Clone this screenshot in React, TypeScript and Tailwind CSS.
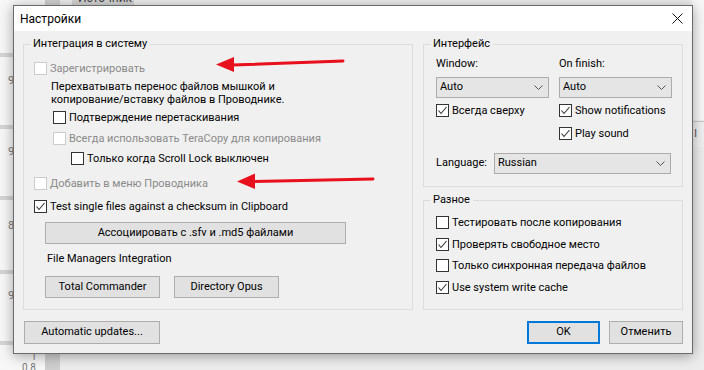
import React from "react";

const font = { fontFamily: 'Roboto, "Noto Sans", sans-serif' };

function Box({ checked, disabled }: { checked?: boolean; disabled?: boolean }) {
  return (
    <span
      className={`flex w-[13px] h-[13px] shrink-0 items-center justify-center border bg-white ${
        disabled ? "border-[#cccccc]" : "border-[#333333]"
      }`}
    >
      {checked && (
        <svg width="11" height="11" viewBox="0 0 11 11">
          <path d="M1.5 5.5 L4 8.5 L9.5 2" fill="none" stroke="#333" strokeWidth="1.1" />
        </svg>
      )}
    </span>
  );
}

function Check({
  label,
  checked,
  disabled,
  className = "",
}: {
  label: string;
  checked?: boolean;
  disabled?: boolean;
  className?: string;
}) {
  return (
    <div className={`flex h-[13px] items-center gap-[3px] ${className}`}>
      <Box checked={checked} disabled={disabled} />
      <span className={`whitespace-nowrap leading-[13px] ${disabled ? "text-[#8a8a8a]" : "text-black"}`}>
        {label}
      </span>
    </div>
  );
}

function Btn({ label, className = "" }: { label: string; className?: string }) {
  return (
    <div
      className={`flex h-[22px] items-center justify-center border border-[#adadad] bg-[#e1e1e1] text-black ${className}`}
    >
      {label}
    </div>
  );
}

function Select({ value, className = "" }: { value: string; className?: string }) {
  return (
    <div
      className={`flex h-[21px] items-center justify-between border border-[#acacac] bg-[#e5e5e5] pl-[3px] pr-[5px] ${className}`}
    >
      <span>{value}</span>
      <svg width="9" height="5" viewBox="0 0 9 5">
        <path d="M0.5 0.5 L4.5 4.5 L8.5 0.5" fill="none" stroke="#555" strokeWidth="1" />
      </svg>
    </div>
  );
}

function Group({
  title,
  className = "",
  children,
}: {
  title: string;
  className?: string;
  children: React.ReactNode;
}) {
  return (
    <div className={`relative border border-[#dcdcdc] ${className}`}>
      <span className="absolute left-[6px] top-[-8px] bg-[#f0f0f0] px-[3px] leading-[14px] text-black">
        {title}
      </span>
      {children}
    </div>
  );
}

function Background() {
  const bars = [53, 125, 196, 270, 341];
  const nums = [
    { y: 75, t: "9" },
    { y: 146, t: "9" },
    { y: 220, t: "8" },
    { y: 290, t: "9" },
  ];
  return (
    <div className="absolute inset-0 flex">
      <div className="relative w-[45px] bg-[#f7f7f7]">
        {bars.map((y) => (
          <div key={y} className="absolute left-0 h-[4px] w-[45px] bg-[#d4d4d4]" style={{ top: y }} />
        ))}
        {nums.map((n) => (
          <span key={n.y} className="absolute left-[8px] text-[11px] leading-[12px] text-[#777]" style={{ top: n.y }}>
            {n.t}
          </span>
        ))}
        <span className="absolute left-[31px] top-[352px] text-[10px] leading-[10px] text-[#777]">1</span>
        <span className="absolute left-[22px] top-[363px] text-[10px] leading-[10px] text-[#777]">0.8</span>
      </div>
      <div className="w-[15px] bg-[#cfcfcf]" />
      <div className="relative flex-1 bg-[#ececec]">
        <div className="absolute left-[12px] top-0 h-[5px] w-[62px] overflow-hidden bg-[#d3d3d3]">
          <span className="absolute left-[6px] top-[-8px] text-[12px] leading-[12px] text-[#444]">Источник</span>
        </div>
        <div className="absolute right-0 top-0 h-[120px] w-[12px] bg-[#f7f7f7]" />
        <div className="absolute right-0 top-[121px] h-[26px] w-[12px] border-t border-[#c8c8c8] bg-[#efefef]" />
        <span className="absolute right-[7px] top-[128px] text-[11px] leading-[12px] text-[#555]">l</span>
      </div>
    </div>
  );
}

export default function App() {
  return (
    <div className="relative h-[370px] w-[704px] overflow-hidden text-[11px]" style={font}>
      <Background />

      <div className="absolute left-[13px] top-[5px] flex h-[349px] w-[680px] flex-col border border-[#6b6b6b] shadow-[0_2px_12px_rgba(0,0,0,0.35)]">
        <div className="flex h-[25px] items-center justify-between bg-white pl-[6px] pr-[9px]">
          <span className="text-[12px] text-black">Настройки</span>
          <svg width="11" height="11" viewBox="0 0 11 11">
            <path d="M0.5 0.5 L10.5 10.5 M10.5 0.5 L0.5 10.5" stroke="#111" strokeWidth="1" />
          </svg>
        </div>

        <div className="flex flex-1 flex-col bg-[#f0f0f0] pl-[9px] pt-[13px]">
          <div className="flex gap-[10px]">
            <Group title="Интеграция в систему" className="h-[266px] w-[390px]">
              <div className="flex flex-col pl-[10px]">
                <Check label="Зарегистрировать" disabled className="mt-[17px]" />
                <div className="ml-[17px] mt-[5px] leading-[13px] text-black">
                  Перехватывать перенос файлов мышкой и
                  <br />
                  копирование/вставку файлов в Проводнике.
                </div>
                <Check label="Подтверждение перетаскивания" className="ml-[19px] mt-[5px]" />
                <Check
                  label="Всегда использовать TeraCopy для копирования"
                  disabled
                  className="ml-[19px] mt-[8px]"
                />
                <Check label="Только когда Scroll Lock выключен" className="ml-[37px] mt-[7px]" />
                <Check label="Добавить в меню Проводника" disabled className="mt-[12px]" />
                <Check label="Test single files against a checksum in Clipboard" checked className="mt-[10px]" />
                <Btn label="Ассоциировать с .sfv и .md5 файлами" className="ml-[11px] mt-[9px] w-[301px]" />
                <div className="ml-[13px] mt-[8px] leading-[14px] text-black">File Managers Integration</div>
                <div className="ml-[11px] mt-[10px] flex gap-[14px]">
                  <Btn label="Total Commander" className="w-[115px]" />
                  <Btn label="Directory Opus" className="w-[105px]" />
                </div>
              </div>
            </Group>

            <div className="flex w-[260px] flex-col gap-[13px]">
              <Group title="Интерфейс" className="h-[143px]">
                <div className="flex flex-col pl-[12px]">
                  <div className="mt-[12px] flex gap-[10px] leading-[14px] text-black">
                    <span className="w-[113px]">Window:</span>
                    <span>On finish:</span>
                  </div>
                  <div className="mt-[6px] flex gap-[10px]">
                    <Select value="Auto" className="w-[113px]" />
                    <Select value="Auto" className="w-[113px]" />
                  </div>
                  <div className="mt-[6px] flex gap-[10px]">
                    <div className="w-[113px]">
                      <Check label="Всегда сверху" checked />
                    </div>
                    <Check label="Show notifications" checked />
                  </div>
                  <Check label="Play sound" checked className="ml-[123px] mt-[10px]" />
                  <div className="mt-[13px] flex items-center">
                    <span className="w-[58px] text-black">Language:</span>
                    <Select value="Russian" className="w-[177px]" />
                  </div>
                </div>
              </Group>

              <Group title="Разное" className="h-[110px]">
                <div className="flex flex-col pl-[12px]">
                  <Check label="Тестировать после копирования" className="mt-[15px]" />
                  <Check label="Проверять свободное место" checked className="mt-[9px]" />
                  <Check label="Только синхронная передача файлов" className="mt-[8px]" />
                  <Check label="Use system write cache" checked className="mt-[9px]" />
                </div>
              </Group>
            </div>
          </div>

          <div className="mt-[11px] flex w-[660px] items-center">
            <Btn label="Automatic updates..." className="ml-[1px] h-[23px] w-[136px]" />
            <div className="ml-auto flex gap-[9px]">
              <div className="flex h-[23px] w-[73px] items-center justify-center border-2 border-[#0078d7] bg-[#e1e1e1] text-black">
                OK
              </div>
              <Btn label="Отменить" className="h-[23px] w-[74px]" />
            </div>
          </div>
        </div>
      </div>

      <svg className="pointer-events-none absolute left-0 top-0" width="704" height="370">
        <path d="M232 65 L343 61" stroke="#e8101c" strokeWidth="3" strokeLinecap="round" />
        <path d="M216 64.5 L234 57 L234 72 Z" fill="#e8101c" />
        <path d="M253 181.5 L373 179" stroke="#e8101c" strokeWidth="3" strokeLinecap="round" />
        <path d="M237 181.5 L255 173.5 L255 189 Z" fill="#e8101c" />
      </svg>
    </div>
  );
}
